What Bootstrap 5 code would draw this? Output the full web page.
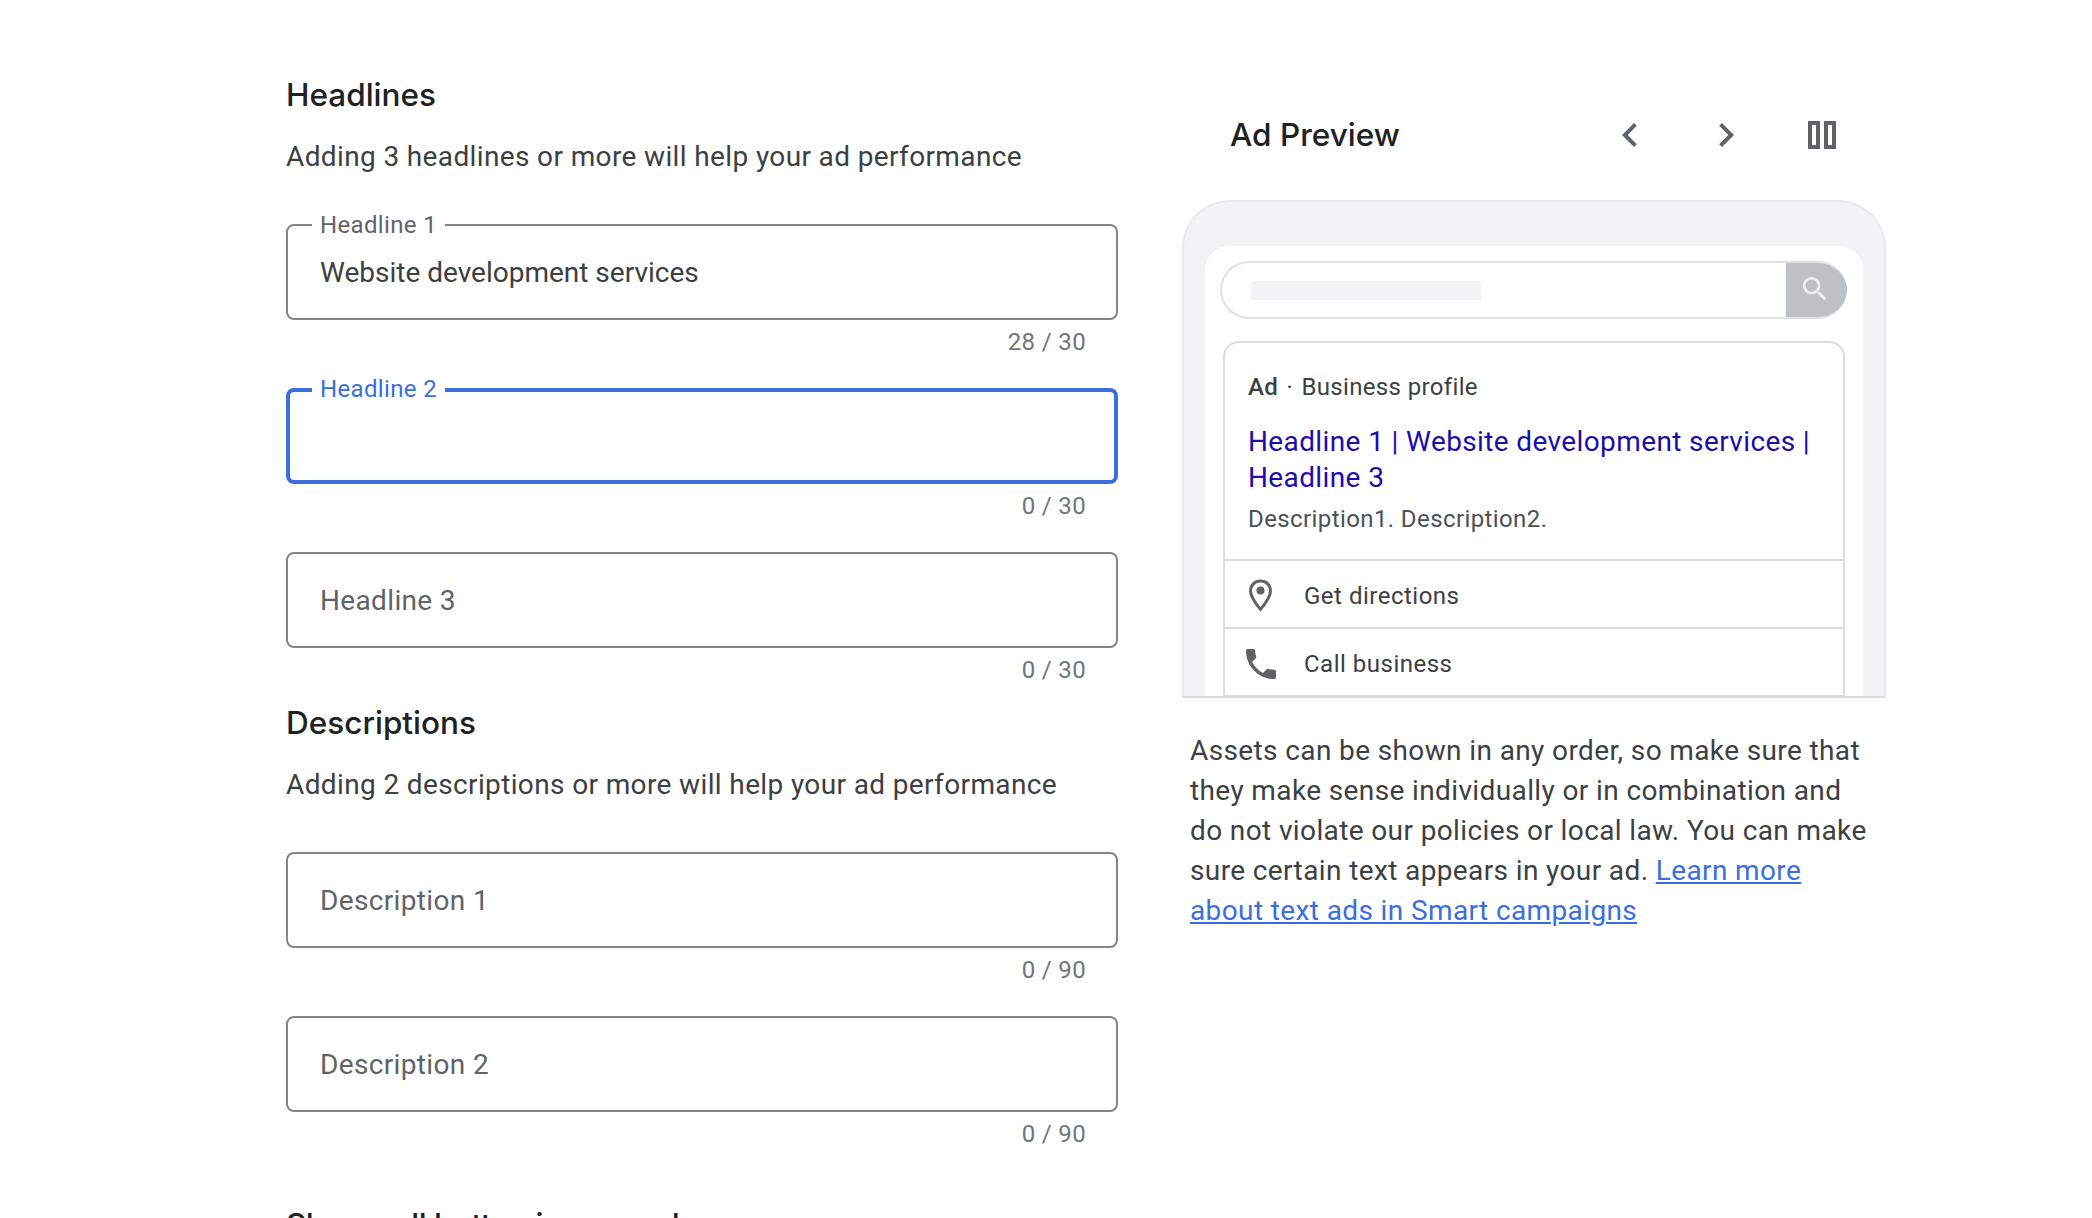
<!doctype html>
<html lang="en">
<head>
<meta charset="utf-8">
<title>Ad assets</title>
<link href="https://cdn.jsdelivr.net/npm/bootstrap@5.3.0/dist/css/bootstrap.min.css" rel="stylesheet">
<style>
body{font-family:Roboto,"Liberation Sans",sans-serif;color:#3c4043;background:#fff}
.page-wrap{padding-left:286px;height:1218px}
.form-side{width:832px;padding-top:75px;flex:none}
.sect-title{font-family:Inter,Roboto,sans-serif;font-size:31.5px;line-height:40px;font-weight:500;color:#202124;margin:0 0 22px;letter-spacing:0}
.sect-title.tight{letter-spacing:-.5px}
.sect-sub{font-size:28px;line-height:40px;margin:0 0 47px;letter-spacing:.37px}
.field-box{height:96px}
.field-input.form-control{height:96px;border:2px solid #80868b;border-radius:8px;padding:0 32px;font-size:28px;color:#3c4043;letter-spacing:.35px;box-shadow:none}
.field-input.form-control.is-filled{letter-spacing:0}
.field-input.form-control::placeholder{color:#5f6368;opacity:1}
.field-input.form-control.is-focus{border:4px solid #3a6fdd;padding:0 30px}
.float-label{position:absolute;left:26px;top:-12px;background:#fff;padding:0 8px;font-size:24px;line-height:26px;color:#5f6368;letter-spacing:.35px}
.float-label.is-focus{color:#3a6fdd}
.char-count{font-size:24px;line-height:26px;padding:9px 32px 0 0;margin-bottom:-1px;color:#70757a;text-align:right;letter-spacing:.35px}
.field-group{margin-bottom:34px}
.field-group.tail{margin-bottom:21px}
.field-group.end{margin-bottom:59px}
.preview-side{width:704px;margin-left:64px;padding-top:103px;flex:none}
.preview-head{height:64px;margin-bottom:33px;padding-left:48px}
.preview-title{font-family:Inter,Roboto,sans-serif;font-size:31.5px;font-weight:500;color:#202124;line-height:40px}
.head-tools{margin-right:40px;gap:48px}
.tool-btn.btn{width:48px;height:48px;padding:0;border:0;display:flex;align-items:center;justify-content:center}
.phone-shell{height:498px;overflow:hidden;background:#f1f3f4;border:2px solid #e8eaed;border-bottom-color:#dadce0;border-radius:48px 48px 0 0;padding:44px 21px 0}
.phone-screen{background:#fff;border-radius:24px 24px 0 0;height:100%;padding:15px 16px 0 15px}
.fake-search{height:58px;border:2px solid #dfe1e5;border-right:0;border-radius:29px;overflow:hidden;margin-bottom:22px}
.fake-text{width:230px;height:19px;background:#f1f3f4;border-radius:2px;margin-left:29px}
.fake-btn{width:61px;height:58px;margin-top:-2px;padding-right:4px;background:#bdc1c6}
.ad-box{margin:0 2px 0 3px;border:2px solid #dadce0;border-bottom:0;border-radius:16px 16px 0 0;height:400px}
.ad-main{height:218px;padding:28px 23px 0;border-bottom:2px solid #dadce0}
.ad-meta{font-size:24px;line-height:32px;color:#3c4043;letter-spacing:.35px;margin-bottom:21px}
.ad-meta b{font-weight:500}
.dot-sep{margin:0 2px}
.ad-link{font-size:28px;line-height:36px;color:#1a0dab;letter-spacing:.38px;margin-bottom:7px;display:block;text-decoration:none}
.ad-desc{font-size:24px;line-height:32px;color:#4d5156;letter-spacing:.4px}
.ad-row{height:68px;padding:3px 0 0 24px;border-bottom:2px solid #dadce0;font-size:24px;letter-spacing:.5px;color:#3c4043}
.ad-row .ico{width:23px;margin-right:32px;flex:none;display:flex;justify-content:center}
.assets-note{font-size:28px;line-height:40px;margin:33px 0 0 8px;width:680px;letter-spacing:.38px}
.assets-note a{color:#3a6fdd}
</style>
</head>
<body class="overflow-hidden">
<div class="page-wrap d-flex">
  <div class="form-side">
    <h2 class="sect-title">Headlines</h2>
    <p class="sect-sub">Adding 3 headlines or more will help your ad performance</p>

    <div class="field-group">
      <div class="field-box position-relative">
        <input class="form-control field-input is-filled" value="Website development services" aria-label="Headline 1">
        <label class="float-label">Headline 1</label>
      </div>
      <div class="char-count">28 / 30</div>
    </div>
    <div class="field-group">
      <div class="field-box position-relative">
        <input class="form-control field-input is-focus" aria-label="Headline 2">
        <label class="float-label is-focus">Headline 2</label>
      </div>
      <div class="char-count">0 / 30</div>
    </div>
    <div class="field-group tail">
      <div class="field-box">
        <input class="form-control field-input" placeholder="Headline 3">
      </div>
      <div class="char-count">0 / 30</div>
    </div>

    <h2 class="sect-title">Descriptions</h2>
    <p class="sect-sub">Adding 2 descriptions or more will help your ad performance</p>

    <div class="field-group">
      <div class="field-box">
        <input class="form-control field-input" placeholder="Description 1">
      </div>
      <div class="char-count">0 / 90</div>
    </div>
    <div class="field-group end">
      <div class="field-box">
        <input class="form-control field-input" placeholder="Description 2">
      </div>
      <div class="char-count">0 / 90</div>
    </div>

    <h2 class="sect-title tight">Show call button in your ad</h2>
  </div>

  <div class="preview-side">
    <div class="preview-head d-flex align-items-center justify-content-between">
      <div class="preview-title">Ad Preview</div>
      <div class="head-tools d-flex">
        <button class="btn tool-btn" aria-label="Previous"><svg width="48" height="48" viewBox="0 0 24 24" fill="#5f6368"><path d="M15.41 7.41L14 6l-6 6 6 6 1.41-1.41L10.83 12z"/></svg></button>
        <button class="btn tool-btn" aria-label="Next"><svg width="48" height="48" viewBox="0 0 24 24" fill="#5f6368"><path d="M8.59 16.59L10 18l6-6-6-6-1.41 1.41L13.17 12z"/></svg></button>
        <button class="btn tool-btn" aria-label="Layout"><svg width="28" height="28" viewBox="0 0 28 28" fill="none" stroke="#5f6368" stroke-width="4"><rect x="2" y="2" width="8" height="24"/><rect x="18" y="2" width="8" height="24"/></svg></button>
      </div>
    </div>

    <div class="phone-shell">
      <div class="phone-screen">
        <div class="fake-search d-flex align-items-center justify-content-between">
          <div class="fake-text"></div>
          <div class="fake-btn d-flex align-items-center justify-content-center">
            <svg width="32" height="32" viewBox="0 0 24 24" fill="#eceef0"><path d="M15.5 14h-.79l-.28-.27C15.41 12.59 16 11.11 16 9.5 16 5.91 13.09 3 9.5 3S3 5.91 3 9.5 5.91 16 9.5 16c1.61 0 3.09-.59 4.23-1.57l.27.28v.79l5 4.99L20.49 19l-4.99-5zm-6 0C7.01 14 5 11.99 5 9.5S7.01 5 9.5 5 14 7.01 14 9.5 11.99 14 9.5 14z"/></svg>
          </div>
        </div>
        <div class="ad-box">
          <div class="ad-main">
            <div class="ad-meta"><b>Ad</b> <span class="dot-sep">·</span> Business profile</div>
            <a class="ad-link" href="#">Headline 1 | Website development services | Headline 3</a>
            <div class="ad-desc">Description1. Description2.</div>
          </div>
          <div class="ad-row d-flex align-items-center">
            <span class="ico"><svg width="23" height="33" viewBox="0 0 23 33" fill="none"><path d="M11.5 2C5.7 2 1.5 6.3 1.5 11.8c0 6 5 12.7 10 18.6 5-5.9 10-12.6 10-18.6C21.5 6.3 17.3 2 11.5 2z" stroke="#5f6368" stroke-width="3"/><circle cx="11.5" cy="11.5" r="4" fill="#5f6368"/></svg></span>
            Get directions
          </div>
          <div class="ad-row d-flex align-items-center">
            <span class="ico"><svg width="40" height="40" viewBox="0 0 24 24" fill="#5f6368" class="flex-shrink-0"><path d="M6.62 10.79c1.44 2.83 3.76 5.14 6.59 6.59l2.2-2.2c.27-.27.67-.36 1.02-.24 1.12.37 2.33.57 3.57.57.55 0 1 .45 1 1V20c0 .55-.45 1-1 1-9.39 0-17-7.61-17-17 0-.55.45-1 1-1h3.5c.55 0 1 .45 1 1 0 1.25.2 2.45.57 3.57.11.35.03.74-.25 1.02l-2.2 2.2z"/></svg></span>
            Call business
          </div>
        </div>
      </div>
    </div>

    <p class="assets-note">Assets can be shown in any order, so make sure that they make sense individually or in combination and do not violate our policies or local law. You can make sure certain text appears in your ad. <a href="#">Learn more about text ads in Smart campaigns</a></p>
  </div>
</div>
<script src="https://cdn.jsdelivr.net/npm/bootstrap@5.3.0/dist/js/bootstrap.bundle.min.js"></script>
</body>
</html>
